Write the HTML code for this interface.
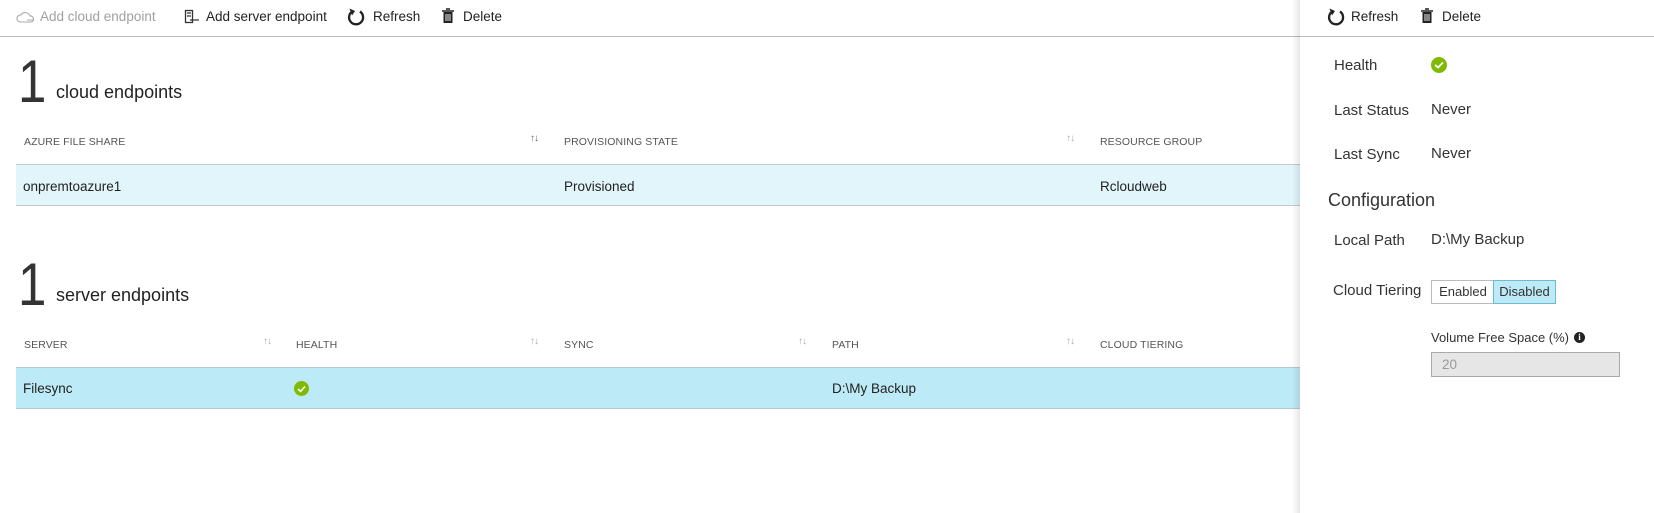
<!DOCTYPE html>
<html><head><meta charset="utf-8"><style>
*{margin:0;padding:0;box-sizing:border-box}
body{width:1654px;height:513px;background:#fff;font-family:"Liberation Sans",sans-serif;color:#222;position:relative;overflow:hidden}
.a{position:absolute;white-space:nowrap}
.tb{font-size:13.5px;line-height:17px;top:8px}
.hd{font-size:10.5px;color:#555;letter-spacing:0.1px}
.cell{font-size:13.5px;color:#222}
.so{font-size:10px;color:#aaa;letter-spacing:-1px}
.lbl{font-size:15px;color:#333}
.big{font-size:60px;line-height:60px;color:#333;transform:scaleX(0.85);transform-origin:left}
.chk{width:16px;height:16px;border-radius:50%;background:#7fba00;display:flex;align-items:center;justify-content:center}
</style></head><body>
<!-- main toolbar -->
<svg class="a" style="left:16px;top:10px" width="20" height="14" viewBox="0 0 20 14"><path d="M4 12 H15 A3 3 0 0 0 14 6 A5 5 0 0 0 5 5 A3.5 3.5 0 0 0 4 12 Z M11 10 H18" fill="none" stroke="#aaa" stroke-width="1.1"/></svg>
<div class="a tb" style="left:40px;color:#a0a0a0">Add cloud endpoint</div>
<svg class="a" style="left:184px;top:9px" width="18" height="16" viewBox="0 0 18 16"><rect x="1.5" y="1.5" width="7" height="12" fill="none" stroke="#333" stroke-width="1.3"/><path d="M3 4h4M3 7h4M6 11 H15" stroke="#333" stroke-width="1.2"/></svg>
<div class="a tb" style="left:206px">Add server endpoint</div>
<svg class="a" style="left:347px;top:7px" width="18" height="19" viewBox="0 0 18 19"><path d="M6 4 A7 7 0 1 0 13 4.5" fill="none" stroke="#222" stroke-width="2.3"/><path d="M2.5 1.5 L8 4 L5 8.5 Z" fill="#222"/></svg>
<div class="a tb" style="left:373px">Refresh</div>
<svg class="a" style="left:441px;top:8px" width="14" height="16" viewBox="0 0 14 16"><path d="M1 3h12M5 1h4" stroke="#222" stroke-width="1.6"/><rect x="2.5" y="4" width="9" height="11" fill="#222"/><path d="M5 6v7M7 6v7M9 6v7" stroke="#fff" stroke-width="0.9"/></svg>
<div class="a tb" style="left:463px">Delete</div>
<div class="a" style="left:0;top:36px;width:1654px;height:1px;background:#bcbcbc"></div>

<!-- cloud endpoints -->
<div class="a big" style="left:18px;top:52px">1</div>
<div class="a" style="left:56px;top:82px;font-size:18px;color:#222">cloud endpoints</div>
<div class="a hd" style="left:24px;top:136px">AZURE FILE SHARE</div>
<div class="a so" style="left:530px;top:133px;color:#666">↑↓</div>
<div class="a hd" style="left:564px;top:136px">PROVISIONING STATE</div>
<div class="a so" style="left:1066px;top:133px">↑↓</div>
<div class="a hd" style="left:1100px;top:136px">RESOURCE GROUP</div>
<div class="a" style="left:16px;top:164px;width:1290px;height:42px;background:#e2f5fb;border-top:1px solid #c0cbd0;border-bottom:1px solid #c0cbd0"></div>
<div class="a cell" style="left:23px;top:179px">onpremtoazure1</div>
<div class="a cell" style="left:564px;top:179px">Provisioned</div>
<div class="a cell" style="left:1100px;top:179px">Rcloudweb</div>

<!-- server endpoints -->
<div class="a big" style="left:18px;top:255px">1</div>
<div class="a" style="left:56px;top:285px;font-size:18px;color:#222">server endpoints</div>
<div class="a hd" style="left:24px;top:339px">SERVER</div>
<div class="a so" style="left:263px;top:336px">↑↓</div>
<div class="a hd" style="left:296px;top:339px">HEALTH</div>
<div class="a so" style="left:530px;top:336px">↑↓</div>
<div class="a hd" style="left:564px;top:339px">SYNC</div>
<div class="a so" style="left:798px;top:336px">↑↓</div>
<div class="a hd" style="left:832px;top:339px">PATH</div>
<div class="a so" style="left:1066px;top:336px">↑↓</div>
<div class="a hd" style="left:1100px;top:339px">CLOUD TIERING</div>
<div class="a" style="left:16px;top:367px;width:1290px;height:42px;background:#bdeaf7;border-top:1px solid #b4c8d0;border-bottom:1px solid #b4c8d0"></div>
<div class="a cell" style="left:23px;top:381px">Filesync</div>
<div class="a chk" style="left:294px;top:381px;width:15px;height:15px"><svg width="9" height="8" viewBox="0 0 9 8"><path d="M1 4 L3.5 6.5 L8 1.5" fill="none" stroke="#fff" stroke-width="1.6"/></svg></div>
<div class="a cell" style="left:832px;top:381px">D:\My Backup</div>

<!-- side panel -->
<div class="a" style="left:1292px;top:0;width:10px;height:513px;background:linear-gradient(to right,rgba(0,0,0,0),rgba(0,0,0,0.12))"></div>
<div class="a" style="left:1300px;top:0;width:354px;height:513px;background:#fff"></div>
<svg class="a" style="left:1327px;top:7px" width="18" height="19" viewBox="0 0 18 19"><path d="M6 4 A7 7 0 1 0 13 4.5" fill="none" stroke="#222" stroke-width="2.3"/><path d="M2.5 1.5 L8 4 L5 8.5 Z" fill="#222"/></svg>
<div class="a tb" style="left:1351px">Refresh</div>
<svg class="a" style="left:1420px;top:8px" width="14" height="16" viewBox="0 0 14 16"><path d="M1 3h12M5 1h4" stroke="#222" stroke-width="1.6"/><rect x="2.5" y="4" width="9" height="11" fill="#222"/><path d="M5 6v7M7 6v7M9 6v7" stroke="#fff" stroke-width="0.9"/></svg>
<div class="a tb" style="left:1442px">Delete</div>
<div class="a" style="left:1300px;top:36px;width:354px;height:1px;background:#bcbcbc"></div>

<div class="a lbl" style="left:1334px;top:57px">Health</div>
<div class="a chk" style="left:1431px;top:57px"><svg width="10" height="8" viewBox="0 0 10 8"><path d="M1 4 L4 6.5 L9 1.5" fill="none" stroke="#fff" stroke-width="1.8"/></svg></div>
<div class="a lbl" style="left:1334px;top:102px">Last Status</div>
<div class="a lbl" style="left:1431px;top:101px">Never</div>
<div class="a lbl" style="left:1334px;top:146px">Last Sync</div>
<div class="a lbl" style="left:1431px;top:145px">Never</div>
<div class="a" style="left:1328px;top:190px;font-size:18px;color:#333">Configuration</div>
<div class="a lbl" style="left:1334px;top:232px">Local Path</div>
<div class="a lbl" style="left:1431px;top:231px">D:\My Backup</div>
<div class="a lbl" style="left:1333px;top:282px">Cloud Tiering</div>
<div class="a" style="left:1431px;top:280px;width:125px;height:24px;border:1px solid #bbb;display:flex;font-size:13px;color:#333">
  <div style="width:62px;text-align:center;line-height:22px;background:#fff">Enabled</div>
  <div style="flex:1;text-align:center;line-height:22px;background:#bdeaf7;border:1px solid #6fb9d0;margin:-1px">Disabled</div>
</div>
<div class="a" style="left:1431px;top:330px;font-size:13px;color:#333">Volume Free Space (%)</div>
<div class="a" style="left:1574px;top:332px;width:11px;height:11px;border-radius:50%;background:#222;color:#fff;font-size:9px;font-weight:bold;text-align:center;line-height:11px;font-family:'Liberation Serif',serif">i</div>
<div class="a" style="left:1431px;top:352px;width:189px;height:25px;background:#e6e6e6;border:1px solid #aaa;font-size:13.5px;color:#999;padding-left:10px;line-height:23px">20</div>
</body></html>
